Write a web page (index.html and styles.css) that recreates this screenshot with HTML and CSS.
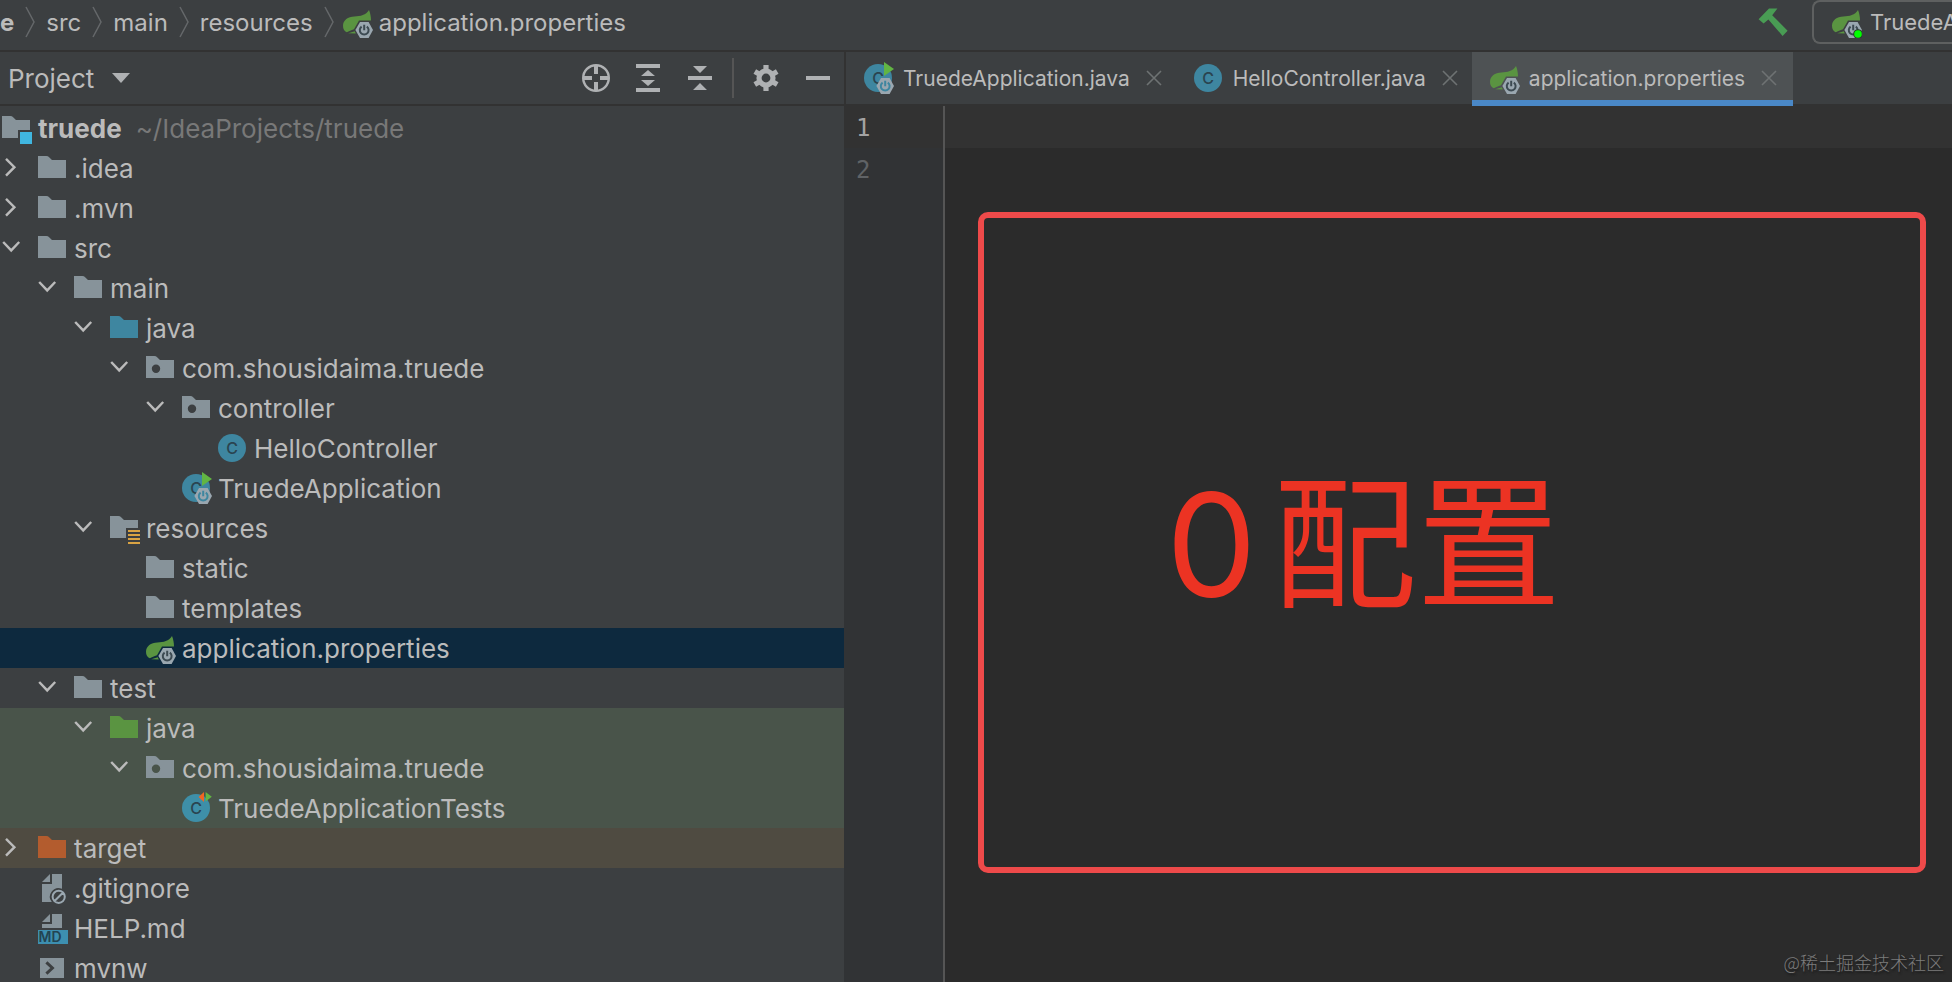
FILE: index.html
```html
<!DOCTYPE html>
<html lang="en">
<head>
  <meta charset="UTF-8">
  <meta name="viewport" content="width=device-width, initial-scale=1.0">
  <title>truede</title>
  <link rel="stylesheet" href="styles.css">
</head>
<body>
  <!-- shared icons, 16 unit grid -->
  <svg class="sprite" aria-hidden="true">
    <symbol id="folder" viewBox="0 0 16 16">
      <path d="M1 13h14V4H8L6.7 2.7A2.3 2.3 0 0 0 5.1 2H1z"/>
    </symbol>
    <symbol id="folder-package" viewBox="0 0 16 16">
      <path fill-rule="evenodd" d="M1 13h14V4H8L6.7 2.7A2.3 2.3 0 0 0 5.1 2H1zM3.9 8.4a2.1 2.1 0 1 1 4.2 0a2.1 2.1 0 1 1-4.2 0z"/>
    </symbol>
    <symbol id="folder-module" viewBox="0 0 16 16">
      <path d="M1 13h8V9h6V4H8L6.7 2.7A2.3 2.3 0 0 0 5.1 2H1z"/>
      <path fill="#40b6e0" d="M10 10h6v6h-6z"/>
    </symbol>
    <symbol id="folder-resources" viewBox="0 0 16 16">
      <path d="M1 13h8V8h6V4H8L6.7 2.7A2.3 2.3 0 0 0 5.1 2H1z"/>
      <path fill="#d9a343" d="M10 9h6v1h-6zM10 11h6v1h-6zM10 13h6v1h-6zM10 15h6v1h-6z"/>
    </symbol>
    <symbol id="class" viewBox="0 0 16 16">
      <circle cx="8" cy="8" r="7" fill="#3e86a0"/>
      <text class="class-letter" x="8" y="11">C</text>
    </symbol>
    <symbol id="boot-badge" viewBox="0 0 16 16">
      <path fill="#9aa7b0" d="M9.5 8h4.3L16 12l-2.2 4H9.5l-2.3-4z"/>
      <path fill="none" stroke="currentColor" stroke-width="1" d="M10.3 10.3a2.2 2.2 0 1 0 2.6 0M11.6 9.4v2.7"/>
    </symbol>
    <symbol id="class-boot" viewBox="0 0 16 16">
      <circle cx="8" cy="8" r="7" fill="#3e86a0"/>
      <text class="class-letter" x="8" y="11">C</text>
      <path fill="#62b543" d="M11 0l5 3.5L11 7z"/>
      <use href="#boot-badge" color="#3e86a0"/>
    </symbol>
    <symbol id="class-test" viewBox="0 0 16 16">
      <circle cx="8" cy="8" r="7" fill="#3e8fa8"/>
      <text class="class-letter" x="8" y="11">C</text>
      <path fill="#f26522" d="M12 0v5L9.3 2.5z"/>
      <path fill="#62b543" d="M12.8 0l3.1 2.4-3.1 2.4z"/>
    </symbol>
    <symbol id="boot-leaf" viewBox="0 0 16 16">
      <path fill="#5a9441" d="M14 2c.7 1.700 1 3.500 1 5.200H9L6.500 11.600C5 12.300 4 12.400 2.900 13.100 1.600 12.600 1 11.500 1 9.900 1 6.900 3.500 5.400 6.700 5.200 9.800 5.100 12.400 4.600 14 2z"/>
      <path fill="#5a9441" d="M3.600 13.600l3.300-1 .5 1.100z"/>
      <use href="#boot-badge"/>
    </symbol>
    <symbol id="file-ignored" viewBox="0 0 16 16">
      <path d="M7 1L3 5h4zM8 1v5H3v9h4.900a4.300 4.300 0 0 1 5.100-6.600V1z"/>
      <path fill="none" stroke="#9aa7b0" stroke-width="1" d="M8.300 12.400a3 3 0 1 1 6.100 0a3 3 0 1 1-6.100 0M9.400 14.400l4-4"/>
    </symbol>
    <symbol id="file-md" viewBox="0 0 16 16">
      <path d="M7 1L3 5h4zM8 1v5H3v2h10V1z"/>
      <path fill="#3d8fb0" d="M1 9h15v7H1z"/>
      <text class="md-letters" x="7" y="15">MD</text>
    </symbol>
    <symbol id="file-shell" viewBox="0 0 16 16">
      <path d="M2 3h12v10H2z"/>
      <path fill="none" stroke="#3c3f41" stroke-width="1.500" d="M5.200 5.200L8.200 8l-3 2.800"/>
    </symbol>
    <symbol id="arrow-down" viewBox="0 0 12 12">
      <path fill="none" stroke="currentColor" stroke-width="1.200" d="M1.600 3l4 4.200 4-4.200"/>
    </symbol>
    <symbol id="arrow-right" viewBox="0 0 12 12">
      <path fill="none" stroke="currentColor" stroke-width="1.200" d="M3 1.400l4.200 4.200L3 9.800"/>
    </symbol>
    <symbol id="separator" viewBox="0 0 10 32">
      <path fill="none" stroke="#65686a" stroke-width="1.500" d="M1 1l8 15-8 15"/>
    </symbol>
    <symbol id="close" viewBox="0 0 16 16">
      <path fill="none" stroke="#6e7273" stroke-width="1.600" d="M1 1l14 14M15 1L1 15"/>
    </symbol>
  </svg>

  <header class="navbar">
    <nav class="breadcrumbs" aria-label="Navigation bar">
      <a class="crumb crumb-root" href="#">e</a>
      <svg class="separator"><use href="#separator"/></svg>
      <a class="crumb" href="#src">src</a>
      <svg class="separator"><use href="#separator"/></svg>
      <a class="crumb" href="#main">main</a>
      <svg class="separator"><use href="#separator"/></svg>
      <a class="crumb" href="#resources">resources</a>
      <svg class="separator"><use href="#separator"/></svg>
      <a class="crumb crumb-file" href="#properties"><svg class="icon"><use href="#boot-leaf"/></svg>application.properties</a>
    </nav>
    <div class="run-tools">
      <button class="tool" aria-label="Build project">
        <svg class="icon" viewBox="0 0 16 16"><path fill="#499c54" d="M.8 6.600L6 1.200h4.200L7.600 4.600l7.700 7.800-2.500 2.600L5.700 6.700 3.300 8.800z"/></svg>
      </button>
      <button class="run-config">
        <svg class="icon" viewBox="0 0 16 16"><use href="#boot-leaf"/><circle cx="14" cy="14" r="2.400" fill="#2b3a2d"/><circle cx="14" cy="14" r="1.900" fill="#0f0"/></svg>
        <span>TruedeApplication</span>
      </button>
    </div>
  </header>

  <main class="workspace">
    <aside class="project">
      <div class="panel-header">
        <button class="panel-title">Project <span class="caret"></span></button>
        <div class="panel-tools">
          <button class="tool" aria-label="Select opened file">
            <svg class="icon" viewBox="0 0 16 16"><circle cx="8" cy="8" r="6.400" fill="none" stroke="#afb1b3" stroke-width="1.200"/><path fill="#afb1b3" d="M7 2h2v4H7zM7 10h2v4H7zM2 7h4v2H2zM10 7h4v2h-4z"/></svg>
          </button>
          <button class="tool" aria-label="Expand all">
            <svg class="icon" viewBox="0 0 16 16"><path fill="#afb1b3" d="M2 1h12v2H2zM2 13h12v2H2zM8 4l3.500 3h-7zM8 12l3.500-3h-7z"/></svg>
          </button>
          <button class="tool" aria-label="Collapse all">
            <svg class="icon" viewBox="0 0 16 16"><path fill="#afb1b3" d="M2 7h12v2H2zM8 5.500L11.500 2h-7zM8 10.500l3.500 3.500h-7z"/></svg>
          </button>
          <span class="divider"></span>
          <button class="tool" aria-label="Settings">
            <svg class="icon" viewBox="0 0 16 16">
              <circle cx="8" cy="8" r="3.500" fill="none" stroke="#afb1b3" stroke-width="2.600"/>
              <path stroke="#afb1b3" stroke-width="2.600" d="M8 1.500v2.200M8 12.300v2.200M2.400 4.800l1.900 1.100M11.700 10.100l1.900 1.100M2.400 11.200l1.900-1.100M11.700 5.900l1.900-1.100"/>
            </svg>
          </button>
          <button class="tool" aria-label="Hide">
            <svg class="icon" viewBox="0 0 16 16"><path fill="#afb1b3" d="M2 7h12v2H2z"/></svg>
          </button>
        </div>
      </div>

      <ul class="tree">
        <li class="row"><svg class="icon"><use href="#folder-module"/></svg><b>truede</b><span class="path">~/IdeaProjects/truede</span></li>
        <li class="row level-1"><button class="toggle" aria-label="Expand .idea"><svg><use href="#arrow-right"/></svg></button><svg class="icon"><use href="#folder"/></svg>.idea</li>
        <li class="row level-1"><button class="toggle" aria-label="Expand .mvn"><svg><use href="#arrow-right"/></svg></button><svg class="icon"><use href="#folder"/></svg>.mvn</li>
        <li class="row level-1"><button class="toggle" aria-label="Collapse src"><svg><use href="#arrow-down"/></svg></button><svg class="icon"><use href="#folder"/></svg>src</li>
        <li class="row level-2"><button class="toggle" aria-label="Collapse main"><svg><use href="#arrow-down"/></svg></button><svg class="icon"><use href="#folder"/></svg>main</li>
        <li class="row level-3"><button class="toggle" aria-label="Collapse java"><svg><use href="#arrow-down"/></svg></button><svg class="icon source"><use href="#folder"/></svg>java</li>
        <li class="row level-4"><button class="toggle" aria-label="Collapse package"><svg><use href="#arrow-down"/></svg></button><svg class="icon"><use href="#folder-package"/></svg>com.shousidaima.truede</li>
        <li class="row level-5"><button class="toggle" aria-label="Collapse controller"><svg><use href="#arrow-down"/></svg></button><svg class="icon"><use href="#folder-package"/></svg>controller</li>
        <li class="row leaf level-6"><svg class="icon"><use href="#class"/></svg>HelloController</li>
        <li class="row leaf level-5"><svg class="icon"><use href="#class-boot"/></svg>TruedeApplication</li>
        <li class="row level-3"><button class="toggle" aria-label="Collapse resources"><svg><use href="#arrow-down"/></svg></button><svg class="icon"><use href="#folder-resources"/></svg>resources</li>
        <li class="row leaf level-4"><svg class="icon"><use href="#folder"/></svg>static</li>
        <li class="row leaf level-4"><svg class="icon"><use href="#folder"/></svg>templates</li>
        <li class="row leaf level-4 selected"><svg class="icon"><use href="#boot-leaf"/></svg>application.properties</li>
        <li class="row level-2"><button class="toggle" aria-label="Collapse test"><svg><use href="#arrow-down"/></svg></button><svg class="icon"><use href="#folder"/></svg>test</li>
        <li class="row level-3 test-row"><button class="toggle" aria-label="Collapse java"><svg><use href="#arrow-down"/></svg></button><svg class="icon test-source"><use href="#folder"/></svg>java</li>
        <li class="row level-4 test-row"><button class="toggle" aria-label="Collapse package"><svg><use href="#arrow-down"/></svg></button><svg class="icon"><use href="#folder-package"/></svg>com.shousidaima.truede</li>
        <li class="row leaf level-5 test-row"><svg class="icon"><use href="#class-test"/></svg>TruedeApplicationTests</li>
        <li class="row level-1 excluded-row"><button class="toggle" aria-label="Expand target"><svg><use href="#arrow-right"/></svg></button><svg class="icon excluded"><use href="#folder"/></svg>target</li>
        <li class="row leaf level-1"><svg class="icon"><use href="#file-ignored"/></svg>.gitignore</li>
        <li class="row leaf level-1"><svg class="icon"><use href="#file-md"/></svg>HELP.md</li>
        <li class="row leaf level-1"><svg class="icon"><use href="#file-shell"/></svg>mvnw</li>
      </ul>
    </aside>

    <section class="editor">
      <div class="tabs">
        <div class="tab">
          <button class="tab-label"><svg class="icon"><use href="#class-boot"/></svg>TruedeApplication.java</button>
          <button class="tab-close" aria-label="Close TruedeApplication.java"><svg><use href="#close"/></svg></button>
        </div>
        <div class="tab">
          <button class="tab-label"><svg class="icon"><use href="#class"/></svg>HelloController.java</button>
          <button class="tab-close" aria-label="Close HelloController.java"><svg><use href="#close"/></svg></button>
        </div>
        <div class="tab active">
          <button class="tab-label"><svg class="icon"><use href="#boot-leaf"/></svg>application.properties</button>
          <button class="tab-close" aria-label="Close application.properties"><svg><use href="#close"/></svg></button>
        </div>
      </div>
      <div class="code">
        <div class="gutter">
          <span class="line-number current">1</span>
          <span class="line-number">2</span>
        </div>
        <div class="canvas">
          <div class="current-line"></div>
          <div class="note"><span>0</span><span>配置</span></div>
          <p class="watermark">@稀土掘金技术社区</p>
        </div>
      </div>
    </section>
  </main>
</body>
</html>
```
FILE: styles.css
```css
* {
  box-sizing: border-box;
}

body {
  margin: 0;
  height: 100vh;
  display: flex;
  flex-direction: column;
  overflow: hidden;
  background-color: #3c3f41;
  color: #bbbbbb;
  font-family: Inter, "Noto Sans CJK SC", sans-serif;
}

button {
  margin: 0;
  padding: 0;
  border: none;
  background: none;
  color: inherit;
  font: inherit;
  cursor: pointer;
}

a {
  color: inherit;
  text-decoration: none;
}

.sprite {
  display: none;
}

.icon {
  display: block;
  flex: none;
  width: 32px;
  height: 32px;
  fill: #87939a;
  color: #3c4a52;
}

.class-letter {
  fill: #2a4450;
  font-size: 8px;
  font-weight: 500;
  text-anchor: middle;
}

.md-letters {
  fill: #234452;
  font-size: 7px;
  font-weight: 600;
  text-anchor: middle;
}

/* navigation bar */
.navbar {
  display: flex;
  justify-content: space-between;
  height: 52px;
  flex: none;
  border-bottom: 2px solid #323232;
  font-size: 24px;
}

.breadcrumbs {
  display: flex;
  align-items: center;
  height: 44px;
  gap: 11px;
}

.crumb-root {
  font-weight: bold;
}

.crumb-file {
  display: flex;
  align-items: center;
  gap: 6px;
  margin-left: -4px;
}

.separator {
  width: 10px;
  height: 32px;
}

.run-tools {
  display: flex;
  gap: 23px;
}

.run-tools .tool {
  height: 44px;
}

.run-config {
  display: flex;
  align-items: center;
  gap: 8px;
  width: 140px;
  height: 44px;
  padding-left: 16px;
  overflow: hidden;
  border: 2px solid #5e6060;
  border-right: none;
  border-radius: 8px 0 0 8px;
  font-size: 22px;
}

/* project panel */
.workspace {
  display: flex;
  flex: 1;
  min-height: 0;
}

.project {
  display: flex;
  flex-direction: column;
  width: 844px;
  flex: none;
}

.panel-header {
  display: flex;
  justify-content: space-between;
  align-items: center;
  height: 54px;
  flex: none;
  padding: 0 10px 0 8px;
  border-bottom: 2px solid #323232;
}

.panel-title {
  display: flex;
  align-items: center;
  gap: 18px;
  font-size: 26px;
}

.caret {
  border-top: 10px solid #afb1b3;
  border-left: 9px solid transparent;
  border-right: 9px solid transparent;
}

.panel-tools {
  display: flex;
  align-items: center;
  gap: 20px;
}

.divider {
  width: 2px;
  height: 40px;
  margin: 0 -4px;
  background-color: #555555;
}

.tree {
  margin: 0;
  padding: 2px 0 0;
  list-style: none;
  font-size: 26px;
}

.row {
  display: flex;
  align-items: center;
  gap: 6px;
  height: 40px;
  white-space: nowrap;
}

.path {
  margin-left: 8px;
  color: #787878;
}

.toggle {
  width: 24px;
  height: 24px;
  margin-right: 6px;
}

.toggle svg {
  display: block;
  width: 24px;
  height: 24px;
}

.level-2 { padding-left: 36px; }
.level-3 { padding-left: 72px; }
.level-4 { padding-left: 108px; }
.level-5 { padding-left: 144px; }
.level-6 { padding-left: 180px; }

.leaf::before {
  content: "";
  width: 30px;
}

.source { fill: #3e86a0; }
.test-source { fill: #5a9441; }
.excluded { fill: #b35c2e; }

.selected { background-color: #0d293e; }
.test-row { background-color: #49544a; }
.excluded-row { background-color: #4f4b41; }

/* editor */
.editor {
  display: flex;
  flex-direction: column;
  flex: 1;
  min-width: 0;
}

.tabs {
  display: flex;
  height: 54px;
  flex: none;
  border-left: 2px solid #323232;
  background: linear-gradient(#3c3f41 52px, #323232 52px);
  font-size: 21px;
}

.tab {
  display: flex;
  align-items: center;
  gap: 16px;
  padding: 0 14px 2px 16px;
}

.tab.active {
  padding-top: 4px;
  padding-bottom: 0;
  padding-right: 16px;
  border-bottom: 6px solid #4a88c7;
  background-color: #4e5254;
}

.tab-label {
  display: flex;
  align-items: center;
  gap: 9px;
}

.tab-close,
.tab-close svg {
  display: block;
  width: 16px;
  height: 16px;
}

.code {
  display: flex;
  flex: 1;
  min-height: 0;
  background-color: #2b2b2b;
}

.gutter {
  display: flex;
  flex-direction: column;
  width: 101px;
  border-right: 2px solid #555555;
  background-color: #313335;
}

.line-number {
  height: 42px;
  padding-left: 12px;
  color: #606366;
  font-family: "DejaVu Sans Mono", monospace;
  font-size: 24px;
  line-height: 44px;
}

.line-number.current {
  background-color: #323232;
  color: #a4a3a3;
}

.canvas {
  position: relative;
  flex: 1;
}

.current-line {
  height: 42px;
  background-color: #323232;
}

/* red box drawn over the code area */
.note {
  position: absolute;
  top: 106px;
  right: 26px;
  bottom: 109px;
  left: 33px;
  display: flex;
  align-items: center;
  gap: 16px;
  padding: 4px 0 0 182px;
  border: 6px solid #ee4a4a;
  border-radius: 10px;
  color: #ec3323;
  font-size: 144px;
  line-height: 1;
}

.watermark {
  position: absolute;
  right: 8px;
  bottom: 7px;
  margin: 0;
  color: #7c7c7c;
  font-family: "Noto Sans CJK SC", sans-serif;
  font-size: 18px;
  font-weight: 300;
  text-shadow: 1px 2px 2px #1a1a1a;
}
```
